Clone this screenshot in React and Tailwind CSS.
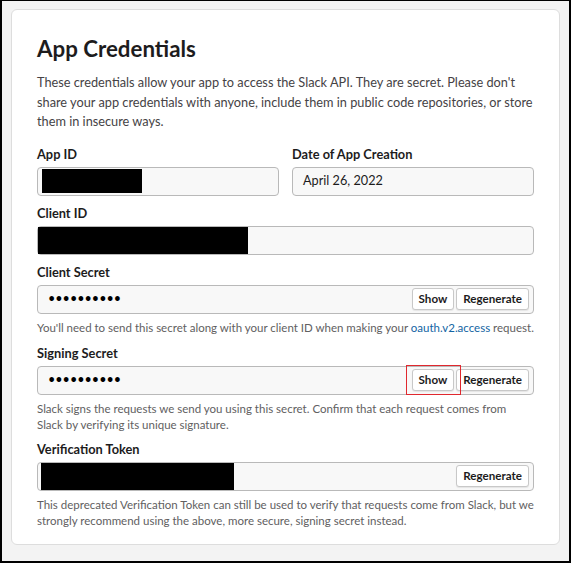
import React from 'react';

const Label = ({ children, className = '' }) => (
  <div className={`text-[12.8px] font-bold text-[#1d1c1d] leading-[20px] ${className}`}>{children}</div>
);

const Box = ({ children, className = '' }) => (
  <div className={`mt-[3px] h-[29px] rounded-[4px] border border-[#b9b9b9] bg-[#f8f8f8] flex items-center ${className}`}>
    {children}
  </div>
);

const Btn = ({ children }) => (
  <button className="h-[22px] px-[6px] rounded-[3px] border border-[#c8c8c8] bg-white text-[11.6px] font-bold text-[#1d1c1d] leading-none shadow-[0_1px_1px_rgba(0,0,0,0.08)]">
    {children}
  </button>
);

const Dots = () => (
  <span className="pl-[10px] text-[12.6px] tracking-[0px] text-black leading-none">••••••••••</span>
);

const Help = ({ children }) => (
  <p className="mt-[6px] text-[11.5px] leading-[16px] text-[#616061]">{children}</p>
);

const App = () => {
  return (
    <div className="w-[571px] h-[563px] bg-[#f3f3f3] border-l-2 border-t border-r-2 border-b-2 border-black font-['Lato',sans-serif] pt-[8px] pl-[9px]">
      <div className="w-[549px] h-[536px] bg-white border border-[#dddddd] rounded-[6px] px-[25px] pt-[24px]">
        <h1 className="text-[22.3px] font-bold text-[#1d1c1d] leading-[30px]">App Credentials</h1>
        <p className="mt-[9px] text-[12.75px] leading-[19.5px] text-[#454245]">
          These credentials allow your app to access the Slack API. They are secret. Please don't share your app credentials with anyone, include them in public code repositories, or store them in insecure ways.
        </p>
        <div className="grid grid-cols-2 gap-x-[13px] mt-[12px]">
          <div>
            <Label>App ID</Label>
            <Box>
              <div className="ml-[4px] w-[100px] h-[24px] bg-black" />
            </Box>
          </div>
          <div>
            <Label>Date of App Creation</Label>
            <Box>
              <span className="pl-[10px] text-[12.7px] text-[#1d1c1d]">April 26, 2022</span>
            </Box>
          </div>
        </div>

        <Label className="mt-[7px]">Client ID</Label>
        <Box>
          <div className="w-[210px] h-[27px] bg-black" />
        </Box>

        <Label className="mt-[7px]">Client Secret</Label>
        <Box className="justify-between pr-[4px]">
          <Dots />
          <div className="flex gap-[2px]">
            <Btn>Show</Btn>
            <Btn>Regenerate</Btn>
          </div>
        </Box>
        <Help>
          You'll need to send this secret along with your client ID when making your{' '}
          <span className="text-[#1264a3]">oauth.v2.access</span> request.
        </Help>

        <Label className="mt-[7px]">Signing Secret</Label>
        <Box className="justify-between pr-[4px]">
          <Dots />
          <div className="flex gap-[2px] items-center">
            <div className="relative flex">
              <Btn>Show</Btn>
              <div className="absolute -left-[6px] -top-[4px] w-[55px] h-[30px] border border-[#e0282e]" />
            </div>
            <Btn>Regenerate</Btn>
          </div>
        </Box>
        <Help>
          Slack signs the requests we send you using this secret. Confirm that each request comes from Slack by verifying its unique signature.
        </Help>

        <Label className="mt-[6px]">Verification Token</Label>
        <Box className="justify-between pr-[4px]">
          <div className="ml-[3px] w-[193px] h-[27px] bg-black" />
          <Btn>Regenerate</Btn>
        </Box>
        <Help>
          This deprecated Verification Token can still be used to verify that requests come from Slack, but we strongly recommend using the above, more secure, signing secret instead.
        </Help>
      </div>
    </div>
  );
};

export default App;
